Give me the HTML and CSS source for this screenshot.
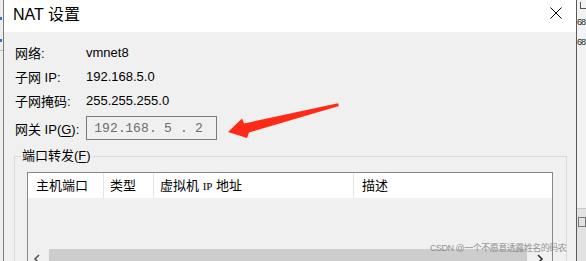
FILE: index.html
```html
<!DOCTYPE html>
<html lang="zh-CN">
<head>
<meta charset="utf-8">
<title>NAT 设置</title>
<link rel="stylesheet" href="styles.css">
</head>
<body>
<div class="screen">
  <div class="side-left">
    <span class="tick tick-a"></span>
    <span class="tick tick-b"></span>
    <span class="side-line"></span>
  </div>
  <div class="dialog">
    <div class="titlebar">
      <span class="title">NAT 设置</span>
      <svg class="close" width="12" height="12" viewBox="0 0 12 12"><path d="M0.5 0.5 L11.5 11.5 M11.5 0.5 L0.5 11.5" stroke="#000" stroke-width="1" fill="none"/></svg>
    </div>
    <div class="content">
      <div class="row"><span class="lbl">网络:</span><span class="val">vmnet8</span></div>
      <div class="row"><span class="lbl">子网 IP:</span><span class="val">192.168.5.0</span></div>
      <div class="row"><span class="lbl">子网掩码:</span><span class="val">255.255.255.0</span></div>
      <div class="row gw">
        <span class="lbl">网关 IP(<u>G</u>):</span>
        <div class="ipbox">
          <span class="oct">192</span><span class="dot">.</span>
          <span class="oct">168</span><span class="dot">.</span>
          <span class="oct">5</span><span class="dot">.</span>
          <span class="oct">2</span>
        </div>
      </div>
      <fieldset class="group">
        <legend>端口转发(<u>F</u>)</legend>
        <div class="list">
          <div class="list-head">
            <div class="col c1">主机端口</div>
            <div class="col c2">类型</div>
            <div class="col c3">虚拟机 <span class="ip">IP</span> 地址</div>
            <div class="col c4">描述</div>
          </div>
          <div class="list-body"></div>
          <div class="hscroll">
            <span class="sb-btn sb-left"><svg width="8" height="10" viewBox="0 0 8 10"><path d="M6 1 L2 5 L6 9" stroke="#555" stroke-width="1.6" fill="none"/></svg></span>
            <span class="sb-track"></span>
            <span class="sb-btn sb-right"><svg width="8" height="10" viewBox="0 0 8 10"><path d="M2 1 L6 5 L2 9" stroke="#333" stroke-width="1.6" fill="none"/></svg></span>
          </div>
        </div>
      </fieldset>
    </div>
  </div>
  <div class="side-right">
    <span class="peek-icon"></span>
    <span class="peek">68</span>
    <span class="peek">68</span>
    <span class="side-panel"><span class="panel-icon"></span></span>
  </div>
  <svg class="arrow" width="586" height="261" viewBox="0 0 586 261">
    <polygon points="228,132 242,118.5 244,123.5 338,103.3 339,106 249,132.5 247,138" fill="#fe2a17"/>
  </svg>
  <div class="watermark">CSDN @一个不愿意透露姓名的码农</div>
</div>
</body>
</html>
```
FILE: styles.css
```css
html, body {
  margin: 0;
  padding: 0;
  background: #f0f0f0;
}

.screen {
  position: relative;
  width: 586px;
  height: 261px;
  overflow: hidden;
  display: flex;
  font-family: "Liberation Sans", "Noto Sans CJK SC", sans-serif;
  font-size: 13px;
  color: #000;
}

.side-left {
  width: 3px;
  flex: none;
  background: #eeeeee;
  position: relative;
  display: flex;
  flex-direction: column;
}

.tick {
  display: block;
  width: 2px;
  height: 3px;
  background: #3a6fd0;
}
.tick-a { margin-top: 17px; }
.tick-b { margin-top: 19px; }
.side-line {
  display: block;
  height: 1px;
  background: #b8b8b8;
  margin-top: 8px;
}

.dialog {
  width: 572px;
  flex: none;
  border-left: 1px solid #7c7c7c;
  border-right: 1px solid #5a5a5a;
  background: #f0f0f0;
  display: flex;
  flex-direction: column;
}

.titlebar {
  height: 32px;
  flex: none;
  background: #ffffff;
  display: flex;
  align-items: center;
  justify-content: space-between;
  padding: 0 14px 0 9px;
  box-sizing: border-box;
}

.title {
  font-size: 16px;
  line-height: 20px;
  margin-top: -3px;
}

.close {
  display: block;
  margin-top: -6px;
}

.content {
  padding: 8px 9px 0 10px;
  display: flex;
  flex-direction: column;
}

.row {
  height: 24px;
  display: flex;
  align-items: center;
}

.row.gw {
  margin-top: 4px;
}

.lbl {
  width: 72px;
  flex: none;
  white-space: nowrap;
  padding-left: 1px;
  box-sizing: border-box;
}

.lbl u {
  text-underline-offset: 2px;
}

.ipbox {
  width: 131px;
  height: 24px;
  box-sizing: border-box;
  border: 1px solid #7a7a7a;
  background: #f0f0f0;
  display: flex;
  align-items: center;
  padding-left: 7px;
  font-family: "Liberation Mono", "DejaVu Sans Mono", monospace;
  font-size: 13px;
  color: #6d6d6d;
}

.oct {
  width: 24px;
  text-align: center;
}

.dot {
  width: 7px;
  text-align: center;
}

.group {
  margin: 8px 0 0 0;
  padding: 8px 13px 0 12px;
  border: 1px solid #dadada;
  border-bottom: none;
  min-width: 0;
  height: 140px;
  box-sizing: border-box;
}

.group legend {
  margin-left: -6px;
  padding: 0 1px;
  line-height: 16px;
  font-size: 13px;
}

.group legend u {
  text-underline-offset: 2px;
}

.list {
  border: 1px solid #828790;
  border-bottom: none;
  display: flex;
  flex-direction: column;
  background: #f0f0f0;
}

.list-head {
  height: 25px;
  background: #ffffff;
  display: flex;
}

.col {
  height: 25px;
  line-height: 25px;
  border-right: 1px solid #e5e5e5;
  box-sizing: border-box;
  white-space: nowrap;
}

.c1 { width: 76px; padding-left: 8px; }
.c2 { width: 50px; padding-left: 6px; }
.c3 { width: 200px; padding-left: 6px; }
.c4 { flex: 1; padding-left: 8px; border-right: none; }

.ip {
  font-family: "Liberation Serif", serif;
  font-size: 11px;
}

.list-body {
  height: 51px;
}

.hscroll {
  height: 17px;
  display: flex;
  background: #f0f0f0;
}

.sb-btn {
  width: 21px;
  display: flex;
  justify-content: center;
  align-items: center;
}

.sb-left svg { margin-left: -4px; margin-top: 2px; }
.sb-right { width: 25px; }
.sb-right svg { margin-top: 2px; }

.sb-track {
  flex: 1;
  background: #cdcdcd;
}

.side-right {
  width: 9px;
  flex: none;
  background: #f3f3f3;
  display: flex;
  flex-direction: column;
  overflow: hidden;
}

.peek-icon {
  display: block;
  width: 5px;
  height: 7px;
  margin: 2px 0 3px 3px;
  border: 1px solid #555;
  border-top: none;
}

.peek {
  display: block;
  height: 20px;
  line-height: 20px;
  font-size: 9px;
  letter-spacing: -1px;
  color: #1a1a1a;
  white-space: nowrap;
  margin-left: 0;
}

.side-panel {
  display: block;
  margin-top: 156px;
  border-top: 1px solid #c9c9c9;
  height: 60px;
  background: #e2e2e2;
  position: relative;
}

.panel-icon {
  display: block;
  width: 6px;
  height: 8px;
  margin: 8px 0 0 1px;
  border: 1px solid #777;
}

.arrow {
  position: absolute;
  left: 0;
  top: 0;
  pointer-events: none;
}

.watermark {
  position: absolute;
  left: 430px;
  top: 242px;
  font-family: "Liberation Sans", "Noto Sans CJK SC", sans-serif;
  font-size: 9px;
  line-height: 12px;
  color: rgba(120, 120, 120, 0.8);
  white-space: nowrap;
  letter-spacing: -0.5px;
}
```
